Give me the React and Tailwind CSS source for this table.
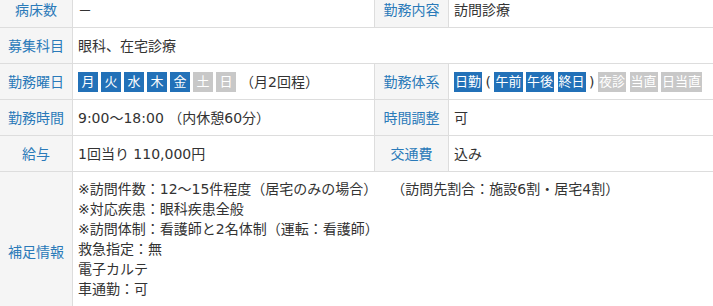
import React from 'react';

const label = 'w-[73px] shrink-0 border-r border-[#dddddd] bg-[#f5f5f5] text-[#2a7ab9] flex items-center justify-center';
const label2 = 'w-[75px] shrink-0 border-l border-r border-[#dddddd] bg-[#f5f5f5] text-[#2a7ab9] flex items-center justify-center';
const cell = 'pl-[5px] pt-[8px] pb-[7px] flex items-center';

function Badge({ children, on = true, wide = false }) {
  return (
    <span
      className={`inline-flex h-[20px] items-center justify-center text-[13px] leading-[20px] text-white ${
        wide ? 'px-px' : 'w-[20px]'
      } ${on ? 'bg-[#2271b8]' : 'bg-[#c8c8c8]'}`}
    >
      {children}
    </span>
  );
}

export default function App() {
  const days = [
    ['月', true], ['火', true], ['水', true], ['木', true], ['金', true], ['土', false], ['日', false],
  ];

  return (
    <div
      className="h-[306px] w-[713px] overflow-hidden bg-white text-[14px] leading-[20px] text-[#333333]"
      style={{ fontFamily: '"DejaVu Sans", "Noto Sans CJK JP", sans-serif' }}
    >
      <div className="-mt-[8px]">
        {/* 病床数 / 勤務内容 */}
        <div className="flex border-b border-[#dddddd]">
          <div className={label}>病床数</div>
          <div className={`${cell} w-[301px] shrink-0`}>－</div>
          <div className={label2}>勤務内容</div>
          <div className={`${cell} flex-1`}>訪問診療</div>
        </div>

        {/* 募集科目 */}
        <div className="flex border-b border-[#dddddd]">
          <div className={label}>募集科目</div>
          <div className={`${cell} flex-1`}>眼科、在宅診療</div>
        </div>

        {/* 勤務曜日 / 勤務体系 */}
        <div className="flex border-b border-[#dddddd]">
          <div className={label}>勤務曜日</div>
          <div className={`${cell} w-[301px] shrink-0 gap-[3px]`}>
            {days.map(([d, on]) => (
              <Badge key={d} on={on}>{d}</Badge>
            ))}
            <span className="ml-px">（月2回程）</span>
          </div>
          <div className={label2}>勤務体系</div>
          <div className={`${cell} flex-1 gap-[3.5px]`}>
            <Badge wide>日勤</Badge>
            <span>(</span>
            <Badge wide>午前</Badge>
            <Badge wide>午後</Badge>
            <Badge wide>終日</Badge>
            <span>)</span>
            <Badge wide on={false}>夜診</Badge>
            <Badge wide on={false}>当直</Badge>
            <Badge wide on={false}>日当直</Badge>
          </div>
        </div>

        {/* 勤務時間 / 時間調整 */}
        <div className="flex border-b border-[#dddddd]">
          <div className={label}>勤務時間</div>
          <div className={`${cell} w-[301px] shrink-0`}>9:00～18:00 （内休憩60分）</div>
          <div className={label2}>時間調整</div>
          <div className={`${cell} flex-1`}>可</div>
        </div>

        {/* 給与 / 交通費 */}
        <div className="flex border-b border-[#dddddd]">
          <div className={label}>給与</div>
          <div className={`${cell} w-[301px] shrink-0`}>1回当り 110,000円</div>
          <div className={label2}>交通費</div>
          <div className={`${cell} flex-1`}>込み</div>
        </div>

        {/* 補足情報 */}
        <div className="flex border-b border-[#dddddd]">
          <div className={label}>補足情報</div>
          <div className="flex-1 pl-[5px] pt-[7px] pb-[33px]">
            <p>※訪問件数：12～15件程度（居宅のみの場合）　　（訪問先割合：施設6割・居宅4割）</p>
            <p>※対応疾患：眼科疾患全般</p>
            <p>※訪問体制：看護師と2名体制（運転：看護師）</p>
            <p>救急指定：無</p>
            <p>電子カルテ</p>
            <p>車通勤：可</p>
          </div>
        </div>
      </div>
    </div>
  );
}
